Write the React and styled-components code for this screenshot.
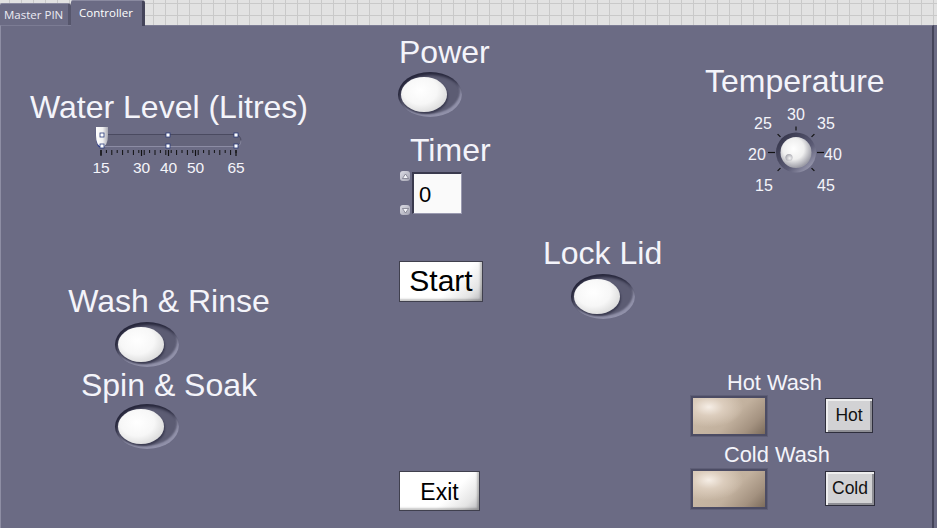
import React from 'react';
import styled, { createGlobalStyle } from 'styled-components';

const PANEL = '#6b6b84';
const LABEL = '#f4f4fa';

const SCALE = [15, 30, 40, 50, 65];
const scaleX = (v) => 12 + (v - 15) * 2.7;
const MINOR_TICKS = Array.from({ length: 26 }, (_, i) => 12 + i * 5.4);

const HANDLES = [
  [13, 10], [79, 10], [147, 10],
  [13, 21], [79, 21], [147, 21],
];

const DIAL = [
  { v: 15, x: 18, y: 83 },
  { v: 20, x: 11, y: 52 },
  { v: 25, x: 17, y: 21 },
  { v: 30, x: 50, y: 12 },
  { v: 35, x: 80, y: 21 },
  { v: 40, x: 87, y: 52 },
  { v: 45, x: 80, y: 83 },
];

const GlobalStyle = createGlobalStyle`
  html, body {
    margin: 0;
    padding: 0;
    background: ${PANEL};
    overflow: hidden;
  }
  body {
    font-family: "Liberation Sans", Arial, sans-serif;
  }
`;

/**
 * Oval boolean switch, LabVIEW style
 */
const Switch = () => (
  <SwitchWell>
    <SwitchCap />
  </SwitchWell>
);

/**
 * Horizontal slide with scale
 */
const Slide = () => (
  <SlideBox>
    <svg width="160" height="34">
      <defs>
        <linearGradient id="thumb" x1="0" y1="0" x2="1" y2="0">
          <stop offset="0" stopColor="#ffffff" />
          <stop offset="0.55" stopColor="#f2f2f2" />
          <stop offset="1" stopColor="#a9a9b4" />
        </linearGradient>
      </defs>
      <rect x="12" y="9.5" width="140" height="12" rx="6" fill="#64647b" stroke="#4a4a60" />
      <path d="M13 21.5 H146 Q152 21.5 152 15.5" fill="none" stroke="#8c8ca4" />
      {MINOR_TICKS.map((x, i) => (
        <line key={i} x1={x} x2={x} y1="25" y2={i % 2 ? 28 : 30} stroke="#111" strokeWidth="1" />
      ))}
      {SCALE.map((v) => (
        <line key={v} x1={scaleX(v)} x2={scaleX(v)} y1="25" y2="31" stroke="#111" strokeWidth="1.2" />
      ))}
      <path d="M6.5 3 Q7 21 10 22 L13 22 Q7 18 7 10 Z" fill="#2b3a8c" />
      <path d="M7 2 H19 V10 Q19 21 13 22 Q7 21 7 10 Z" fill="url(#thumb)" />
      {HANDLES.map(([x, y], i) => (
        <rect key={i} x={x - 2} y={y - 2} width="4" height="4" fill="#ffffff" stroke="#2a3a7a" strokeWidth="0.8" />
      ))}
    </svg>
    {SCALE.map((v) => (
      <ScaleLabel key={v} style={{ left: scaleX(v) }}>
        {v}
      </ScaleLabel>
    ))}
  </SlideBox>
);

/**
 * Rotary knob with dial labels
 */
const Knob = () => (
  <KnobBox>
    <svg width="100" height="90">
      <defs>
        <linearGradient id="ring" x1="0" y1="0" x2="1" y2="1">
          <stop offset="0" stopColor="#2e2e42" />
          <stop offset="0.6" stopColor="#5a5a74" />
          <stop offset="1" stopColor="#b4b4c8" />
        </linearGradient>
        <radialGradient id="cap" cx="0.42" cy="0.38" r="0.62">
          <stop offset="0" stopColor="#ffffff" />
          <stop offset="0.55" stopColor="#efefef" />
          <stop offset="1" stopColor="#9c9ca6" />
        </radialGradient>
        <radialGradient id="dimple" cx="0.6" cy="0.6" r="0.6">
          <stop offset="0" stopColor="#f4f4f4" />
          <stop offset="1" stopColor="#a8a8b0" />
        </radialGradient>
      </defs>
      {DIAL.map(({ v }) => {
        const a = ((v - 30) * 45 * Math.PI) / 180;
        const r1 = v === 20 || v === 40 ? 21 : 22;
        const r2 = v === 20 || v === 40 ? 28 : 26;
        return (
          <line
            key={v}
            x1={50 + Math.sin(a) * r1}
            y1={49.5 - Math.cos(a) * r1}
            x2={50 + Math.sin(a) * r2}
            y2={49.5 - Math.cos(a) * r2}
            stroke="#111"
            strokeWidth="1.2"
          />
        );
      })}
      <circle cx="50" cy="49.5" r="20" fill="url(#ring)" />
      <circle cx="50" cy="49.5" r="15.5" fill="url(#cap)" />
      <circle cx="43" cy="54.5" r="3.6" fill="url(#dimple)" />
    </svg>
    {DIAL.map(({ v, x, y }) => (
      <DialLabel key={v} style={{ left: x, top: y }}>
        {v}
      </DialLabel>
    ))}
  </KnobBox>
);

const Arrow = ({ down }) => (
  <ArrowKey>
    <svg width="9" height="9">
      <path d={down ? 'M1.5 2.5 H7.5 L4.5 7 Z' : 'M1.5 6.5 H7.5 L4.5 2 Z'} fill="#f6f6fa" stroke="#6e6e7e" strokeWidth="0.7" />
    </svg>
  </ArrowKey>
);

const App = () => (
  <>
    <GlobalStyle />
    <TabStrip>
      <Tab>Master PIN</Tab>
      <Tab active>Controller</Tab>
    </TabStrip>

    <Panel>
      <LeftCol>
        <Label>Water Level (Litres)</Label>
        <Slide />
        <Label $mt={108}>Wash &amp; Rinse</Label>
        <Place $mt={5} $ml={114}>
          <Switch />
        </Place>
        <Label $mt={2}>Spin &amp; Soak</Label>
        <Place $mt={3} $ml={114}>
          <Switch />
        </Place>
      </LeftCol>

      <CenterCol>
        <Label $ml={4}>Power</Label>
        <Place $mt={4} $ml={3}>
          <Switch />
        </Place>
        <Label $mt={17} $ml={15}>Timer</Label>
        <Numeric>
          <Arrows>
            <Arrow />
            <Arrow down />
          </Arrows>
          <NumberField>0</NumberField>
        </Numeric>
        <PushButton $mt={46} $w={84} $h={41} $size={30}>Start</PushButton>
        <PushButton $mt={169} $w={81} $h={40} $size={23} $pt={3}>Exit</PushButton>
      </CenterCol>

      <LockCol>
        <Label $ml={3}>Lock Lid</Label>
        <Place $mt={5} $ml={31}>
          <Switch />
        </Place>
      </LockCol>

      <RightCol>
        <Label $ml={15}>Temperature</Label>
        <Knob />
        <SmallLabel $mt={179} $ml={37}>Hot Wash</SmallLabel>
        <LedRow $mt={3}>
          <Led />
          <SmallButton $w={48}>Hot</SmallButton>
        </LedRow>
        <SmallLabel $mt={8} $ml={34}>Cold Wash</SmallLabel>
        <LedRow $mt={4}>
          <Led />
          <SmallButton $w={50}>Cold</SmallButton>
        </LedRow>
      </RightCol>
    </Panel>
  </>
);

const TabStrip = styled.div`
  display: flex;
  align-items: flex-end;
  height: 25px;
  background-color: #e2e2e2;
  background-image:
    linear-gradient(#c9c9c9 1px, transparent 1px),
    linear-gradient(90deg, #c9c9c9 1px, transparent 1px);
  background-size: 12px 12px;
  background-position: 9px 3px;
`;

const Tab = styled.div`
  box-sizing: border-box;
  height: ${({ active }) => (active ? 26 : 22)}px;
  margin-bottom: ${({ active }) => (active ? -1 : 0)}px;
  padding: ${({ active }) => (active ? '5px 10px 0 8px' : '4px 6px 0 4px')};
  width: ${({ active }) => (active ? 74 : 71)}px;
  background: ${PANEL};
  border-top: 1px solid #8a8aa0;
  border-right: 3px solid ${({ active }) => (active ? '#44445a' : '#56566c')};
  border-radius: 2px 3px 0 0;
  color: ${({ active }) => (active ? '#ffffff' : '#ececf4')};
  font-family: "Open Sans", "Liberation Sans", sans-serif;
  font-size: 11.5px;
  line-height: 14px;
  white-space: nowrap;
  position: relative;
  z-index: ${({ active }) => (active ? 2 : 1)};
`;

const Panel = styled.div`
  box-sizing: border-box;
  display: flex;
  width: 934px;
  height: 503px;
  background: ${PANEL};
  border-top: 1px solid #7c7c94;
  border-left: 1px solid #8e8ea4;
  border-right: 2px solid #44445a;
  color: ${LABEL};
`;

const Column = styled.div`
  display: flex;
  flex-direction: column;
  align-items: flex-start;
  flex-shrink: 0;
`;

const LeftCol = styled(Column)`
  width: 394px;
  padding: 65px 58px 0 0;
  box-sizing: border-box;
  align-items: center;
`;

const CenterCol = styled(Column)`
  width: 145px;
  padding-top: 10px;
`;

const LockCol = styled(Column)`
  width: 150px;
  padding-top: 211px;
`;

const RightCol = styled(Column)`
  flex: 1;
  padding-top: 39px;
`;

const Label = styled.div`
  margin: ${({ $mt = 0 }) => $mt}px 0 0 ${({ $ml = 0 }) => $ml}px;
  font-size: 32px;
  line-height: 32px;
  white-space: nowrap;
  color: ${LABEL};
`;

const SmallLabel = styled(Label)`
  font-size: 21.8px;
  line-height: 21px;
`;

const Place = styled.div`
  align-self: flex-start;
  margin: ${({ $mt = 0 }) => $mt}px 0 0 ${({ $ml = 0 }) => $ml}px;
`;

const SwitchWell = styled.div`
  position: relative;
  width: 64px;
  height: 45px;
  border-radius: 50%;
  background: #5c5c73;
  box-shadow:
    inset 2px 3px 3px rgba(20, 20, 40, 0.75),
    inset -2px -3px 2px rgba(190, 190, 215, 0.55);
`;

const SwitchCap = styled.div`
  position: absolute;
  left: 3px;
  top: 5px;
  width: 46px;
  height: 35px;
  border-radius: 50%;
  background: radial-gradient(ellipse at 42% 38%, #ffffff 0%, #f7f7f7 45%, #dcdcdc 75%, #9a9aa0 100%);
  box-shadow: 1px 2px 2px rgba(20, 20, 40, 0.45);
`;

const SlideBox = styled.div`
  position: relative;
  align-self: flex-start;
  width: 160px;
  height: 52px;
  margin: 2px 0 0 88px;
`;

const ScaleLabel = styled.span`
  position: absolute;
  top: 35px;
  transform: translateX(-50%);
  font-size: 15.5px;
  line-height: 15px;
  color: ${LABEL};
`;

const KnobBox = styled.div`
  position: relative;
  width: 100px;
  height: 90px;
  margin: 6px 0 0 56px;
`;

const DialLabel = styled.span`
  position: absolute;
  transform: translate(-50%, -50%);
  font-size: 16px;
  line-height: 16px;
  color: ${LABEL};
`;

const Numeric = styled.div`
  display: flex;
  align-items: stretch;
  gap: 2px;
  height: 44px;
  margin: 5px 0 0 4px;
`;

const Arrows = styled.div`
  display: flex;
  flex-direction: column;
  justify-content: space-between;
  padding: 0 0 0 1px;
`;

const ArrowKey = styled.span`
  display: flex;
  align-items: center;
  justify-content: center;
  width: 10px;
  height: 10px;
  border-radius: 3px;
  background: linear-gradient(135deg, #dcdce4, #a4a4b2);
`;

const NumberField = styled.div`
  box-sizing: border-box;
  display: flex;
  align-items: center;
  width: 50px;
  height: 42px;
  margin-top: 1px;
  padding: 2px 0 0 5px;
  background: #fafafa;
  border-top: 2px solid #3a3a4e;
  border-left: 2px solid #3a3a4e;
  border-right: 1px solid #9a9ab0;
  border-bottom: 1px solid #9a9ab0;
  color: #000;
  font-size: 22px;
`;

const PushButton = styled.div`
  box-sizing: border-box;
  display: flex;
  align-items: center;
  justify-content: center;
  width: ${({ $w }) => $w}px;
  height: ${({ $h }) => $h}px;
  margin: ${({ $mt }) => $mt}px 0 0 4px;
  padding: ${({ $pt = 0 }) => $pt}px 0 1px;
  background: linear-gradient(135deg, #ffffff 0%, #ffffff 62%, #e4e4e4 85%, #b8b8bc 100%);
  border: 1px solid #40404e;
  box-shadow: inset -2px -2px 2px rgba(0, 0, 0, 0.22);
  color: #000;
  font-size: ${({ $size }) => $size}px;
`;

const LedRow = styled.div`
  display: flex;
  align-items: flex-start;
  margin: ${({ $mt }) => $mt}px 0 0 1px;
`;

const Led = styled.div`
  box-sizing: border-box;
  width: 76px;
  height: 40px;
  border: 2px solid #4c4c64;
  box-shadow: 0 0 0 1px #5e5e76;
  background: radial-gradient(ellipse 60% 70% at 22% 25%, #f6eee6 0%, #dccdbd 35%, transparent 80%),
    linear-gradient(135deg, #cdbdaa 0%, #c2b19e 55%, #a49280 80%, #7c6c5c 100%);
`;

const SmallButton = styled.div`
  box-sizing: border-box;
  display: flex;
  align-items: center;
  justify-content: center;
  width: ${({ $w }) => $w}px;
  height: 35px;
  margin: 2px 0 0 58px;
  background: #d2d2d4;
  border: 1px solid #2e2e3c;
  box-shadow: inset 2px 2px 0 #eeeeee, inset -2px -2px 0 #8e8e94;
  color: #111;
  font-size: 17.5px;
`;

export default App;
